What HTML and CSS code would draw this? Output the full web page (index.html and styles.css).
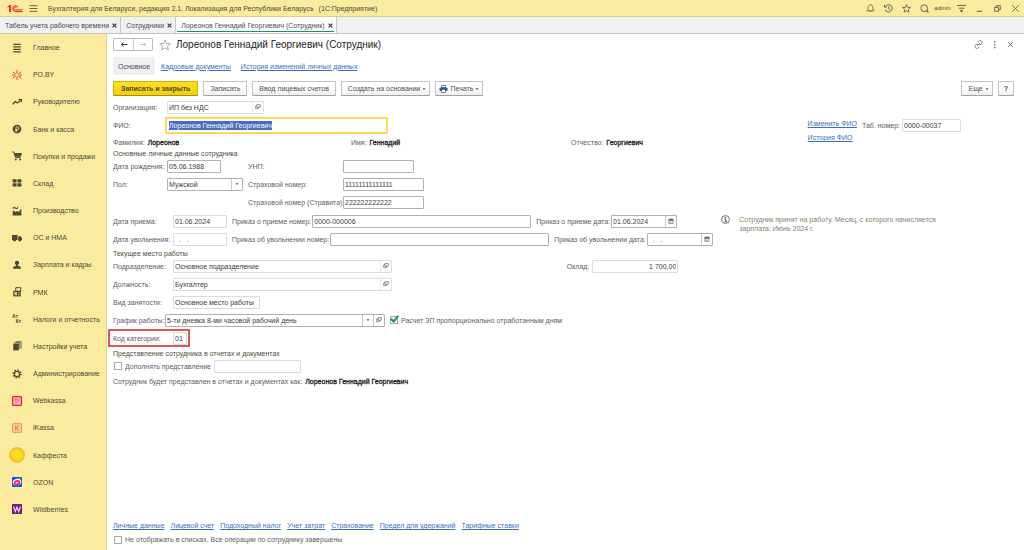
FILE: index.html
```html
<!DOCTYPE html>
<html lang="ru">
<head>
<meta charset="utf-8">
<title>Лореонов Геннадий Георгиевич (Сотрудник)</title>
<link rel="stylesheet" href="styles.css">
</head>
<body>
<svg class="sprite" aria-hidden="true">
  <symbol id="open" viewBox="0 0 14 14"><path d="M4.5 1.5h8v6h-8zM4.500 4.500h-3v6.500h6.500v-3.500" fill="none" stroke="currentColor" stroke-width="1.500"/></symbol>
  <symbol id="cal" viewBox="0 0 14 14"><path d="M2 3h10v9.500H2z" fill="none" stroke="currentColor" stroke-width="1.500"/><path d="M2 3h10v3.500H2zM4 1h1.500v2H4zM8.500 1H10v2H8.500z" fill="currentColor"/><path d="M4 8.500h6M4 10.500h6" stroke="currentColor" stroke-dasharray="1 1"/></symbol>
  <symbol id="caret" viewBox="0 0 8 8"><path d="M1 2.500h6L4 6z" fill="currentColor"/></symbol>
  <symbol id="star" viewBox="0 0 16 16"><path d="M8 1.200l2 4.700 5 .4-3.800 3.300 1.200 5L8 12l-4.400 2.600 1.200-5L1 6.300l5-.4z" fill="none" stroke="currentColor" stroke-width="1.300"/></symbol>
</svg>

<header class="titlebar">
  <svg class="logo" viewBox="0 0 32 18" aria-label="1С"><g fill="none" stroke="#e0262b" stroke-width="2"><path d="M1 6.500l4-3.500v13M4 3h3.500v13"/><path d="M22 6a5.800 5.800 0 1 0-5.500 9H31"/><path d="M19 7.500a2.800 2.800 0 1 0-2.500 4.200H31"/></g></svg>
  <button class="tool" aria-label="Меню"><svg viewBox="0 0 16 16"><path d="M1 3h14M1 8h14M1 13h14" stroke="currentColor" stroke-width="1.500"/></svg></button>
  <div class="app-name">Бухгалтерия для Беларуси, редакция 2.1. Локализация для Республики Беларусь <span>(1С:Предприятие)</span></div>
  <div class="window-tools">
    <button class="tool" aria-label="Уведомления"><svg viewBox="0 0 16 16"><path d="M8 1.500c3 0 4 2.500 4 5 0 3 1 4 2.500 5.500h-13C3 10.500 4 9.500 4 6.500c0-2.500 1-5 4-5zM6.500 12.500q1.500 3 3 0" fill="none" stroke="currentColor" stroke-width="1.300"/></svg></button>
    <button class="tool" aria-label="История"><svg viewBox="0 0 16 16"><path d="M2.500 4.500A6.500 6.500 0 1 1 2 10M1 1.500v4h4M8.500 4v4.500l3 2" fill="none" stroke="currentColor" stroke-width="1.400"/></svg></button>
    <button class="tool" aria-label="Избранное"><svg><use href="#star"/></svg></button>
    <button class="tool" aria-label="Поиск"><svg viewBox="0 0 16 16"><circle cx="7.500" cy="7.500" r="6" fill="none" stroke="currentColor" stroke-width="1.400"/><path d="M11.500 11.500l3.500 3.500" stroke="currentColor" stroke-width="2"/></svg></button>
    <button class="user">admin</button>
    <button class="tool" aria-label="Настройки"><svg viewBox="0 0 16 16"><path d="M0 2.500h16M3 7.500h10" stroke="currentColor" stroke-width="1.500"/><path d="M5 11h6l-3 4z" fill="currentColor"/></svg></button>
    <button class="tool" aria-label="Свернуть"><svg viewBox="0 0 16 16"><path d="M3 13h10" stroke="currentColor" stroke-width="1.500"/></svg></button>
    <button class="tool" aria-label="Окно"><svg viewBox="0 0 16 16"><path d="M3 6h7v7H3zM6 6V3h7v7h-3" fill="none" stroke="currentColor" stroke-width="1.400"/></svg></button>
    <button class="tool" aria-label="Закрыть"><svg viewBox="0 0 16 16"><path d="M2 2l12 12M14 2L2 14" stroke="currentColor" stroke-width="1.300"/></svg></button>
  </div>
</header>

<nav class="tabs" aria-label="Окна">
  <div class="tab"><a href="#">Табель учета рабочего времени</a><button aria-label="Закрыть"><svg viewBox="0 0 8 8"><path d="M1 1l6 6M7 1L1 7" stroke="currentColor" stroke-width="1.800"/></svg></button></div>
  <div class="tab"><a href="#">Сотрудники</a><button aria-label="Закрыть"><svg viewBox="0 0 8 8"><path d="M1 1l6 6M7 1L1 7" stroke="currentColor" stroke-width="1.800"/></svg></button></div>
  <div class="tab active"><a href="#">Лореонов Геннадий Георгиевич (Сотрудник)</a><button aria-label="Закрыть"><svg viewBox="0 0 8 8"><path d="M1 1l6 6M7 1L1 7" stroke="currentColor" stroke-width="1.800"/></svg></button></div>
</nav>

<div class="workspace">
  <nav class="sections" aria-label="Разделы">
    <a href="#"><svg viewBox="0 0 16 16"><path d="M2 2h12M2 6h12M2 10h12M2 14h12" stroke="currentColor" stroke-width="2"/></svg>Главное</a>
    <a href="#"><svg viewBox="0 0 16 16"><path d="M8 0v6M8 10v6M1 3l5 3.500M15 3l-5 3.500M1 13l5-3.500M15 13l-5-3.500M0 8h5M11 8h5" stroke="#e8453c" stroke-width="1.600"/></svg>РО.BY</a>
    <a href="#"><svg viewBox="0 0 16 16"><path d="M1 12l4-5 4 2.500L14 5" fill="none" stroke="currentColor" stroke-width="2"/><path d="M10 3h6v6z" fill="currentColor"/></svg>Руководителю</a>
    <a href="#"><svg viewBox="0 0 16 16"><circle cx="8" cy="8" r="7" fill="currentColor"/><path d="M6.500 13V4.500H9a2.200 2.200 0 0 1 0 4.500H5M5 11h4" fill="none" stroke="#fbeb9e" stroke-width="1.300"/></svg>Банк и касса</a>
    <a href="#"><svg viewBox="0 0 16 16"><path d="M0 1.500h3L5.500 10.500H14" fill="none" stroke="currentColor" stroke-width="1.500"/><path d="M3.500 3H16l-2 6H5z" fill="currentColor"/><circle cx="6" cy="13.500" r="1.700" fill="currentColor"/><circle cx="13" cy="13.500" r="1.700" fill="currentColor"/></svg>Покупки и продажи</a>
    <a href="#"><svg viewBox="0 0 16 16"><path d="M1 2h6.300v5H1zM8.700 2H15v5H8.700zM1 8.500h6.300v5H1zM8.700 8.500H15v5H8.700z" fill="currentColor"/></svg>Склад</a>
    <a href="#"><svg viewBox="0 0 16 16"><path d="M1 15V9l3-2 1 3 4-3v3l4-3V5h2v10z" fill="currentColor"/><path d="M2 5V2h3v2h4V1" fill="none" stroke="currentColor" stroke-width="1.500"/></svg>Производство</a>
    <a href="#"><svg viewBox="0 0 16 16"><path d="M0 3h9v8H0zM10 5h3.500L16 8v3h-6z" fill="currentColor"/><circle cx="4" cy="11.500" r="2" fill="currentColor"/><circle cx="12.500" cy="11.500" r="2" fill="currentColor"/></svg>ОС и НМА</a>
    <a href="#"><svg viewBox="0 0 16 16"><circle cx="8" cy="4.500" r="3.500" fill="currentColor"/><path d="M6.500 7h3v2.500q5 .5 5 4.500h-13q0-4 5-4.500z" fill="currentColor"/></svg>Зарплата и кадры</a>
    <a href="#"><svg viewBox="0 0 16 16"><path d="M2 6h12v9H2z" fill="currentColor"/><path d="M6 1h8v6H6z" fill="none" stroke="currentColor" stroke-width="1.500"/><path d="M4 8h4v5H4zM10 8h2v2h-2zM10 11h2v2h-2z" fill="#d9cc8b"/></svg>РМК</a>
    <a href="#"><svg class="letters" viewBox="0 0 16 16"><text x="0" y="7">Ат</text><text x="6" y="15">Кт</text></svg>Налоги и отчетность</a>
    <a href="#"><svg viewBox="0 0 16 16"><path d="M2 4h9v11H2z" fill="currentColor"/><path d="M4 2.500h8.500V13M6 1h8.500v11" fill="none" stroke="currentColor" stroke-width="1.200"/></svg>Настройки учета</a>
    <a href="#"><svg viewBox="0 0 16 16"><circle cx="8" cy="8" r="4.200" fill="none" stroke="currentColor" stroke-width="2"/><circle cx="8" cy="8" r="6.300" fill="none" stroke="currentColor" stroke-width="2.400" stroke-dasharray="2.200 2.748"/></svg>Администрирование</a>
    <a href="#"><svg viewBox="0 0 16 16"><rect x="1" y="1" width="14" height="14" rx="1" fill="#fbc0c4" stroke="#ee1c3c" stroke-width="2"/><path d="M4 5h8M4 8h3M9 8h3M4 11h5M6 4v3M10 6v3" stroke="#ee3c58"/></svg>Webkassa</a>
    <a href="#"><svg viewBox="0 0 16 16"><rect x="1" y="1" width="14" height="14" rx="1" fill="#fad08c" stroke="#ee8a5c" stroke-width="1.500"/><path d="M6 4v8M11 4L6.500 8l4.500 4" fill="none" stroke="#e5694a" stroke-width="1.500"/></svg>iKassa</a>
    <a href="#"><svg class="coin" viewBox="0 0 16 16"><circle cx="8" cy="8" r="7.300" fill="#fcd51e" stroke="#e2ab1d"/><circle cx="8" cy="8" r="5" fill="#ffdc25" stroke="#f0bf18" stroke-width=".6"/></svg>Каффеста</a>
    <a href="#"><svg viewBox="0 0 16 16"><rect width="16" height="16" rx="2" fill="#1457dc"/><ellipse cx="8" cy="8" rx="7" ry="5" fill="#fff" transform="rotate(-18 8 8)"/><ellipse cx="8" cy="9" rx="4.300" ry="2.500" fill="#fff" stroke="#f01c50" stroke-width="2.600" transform="rotate(-18 8 9)"/></svg>OZON</a>
    <a href="#"><svg viewBox="0 0 16 16"><rect width="16" height="16" rx="1" fill="#6e1f86"/><path d="M2.500 4l2.800 8L8 5l2.700 7 2.800-8" fill="none" stroke="#f3dcf5" stroke-width="1.800"/></svg>Wildberries</a>
  </nav>

  <main class="card">
    <div class="heading">
      <div class="history"><button aria-label="Назад"><svg viewBox="0 0 16 10"><path d="M15 5H3M7 1L2.500 5 7 9" fill="none" stroke="#333" stroke-width="2"/></svg></button><button aria-label="Вперед"><svg viewBox="0 0 16 10"><path d="M1 5h12M9 1l4.500 4L9 9" fill="none" stroke="#aaa" stroke-width="1.500"/></svg></button></div>
      <button class="fav" aria-label="В избранное"><svg><use href="#star"/></svg></button>
      <h1>Лореонов Геннадий Георгиевич (Сотрудник)</h1>
      <div class="card-tools">
        <button class="tool" aria-label="Ссылка"><svg viewBox="0 0 16 16"><path d="M7 4l1-1.500C10-.5 14.500 1 14.500 4.500 14 7.500 11 9 9 8M9 12l-1 1.500C6 16 1.500 15 1.500 11.500 2 8.500 5 7 7 8M5.500 10.500l5-5" fill="none" stroke="currentColor" stroke-width="1.300"/></svg></button>
        <button class="tool" aria-label="Действия"><svg viewBox="0 0 16 16"><path d="M7 2h2.500v2.500H7zM7 7h2.500v2.500H7zM7 12h2.500v2.500H7z" fill="currentColor"/></svg></button>
        <button class="tool" aria-label="Закрыть"><svg viewBox="0 0 16 16"><path d="M4 4l8 8M12 4l-8 8" stroke="currentColor" stroke-width="1.500"/></svg></button>
      </div>
    </div>

    <nav class="subnav"><span class="current">Основное</span><a href="#">Кадровые документы</a><a href="#">История изменений личных данных</a></nav>

    <div class="toolbar">
      <button class="btn primary">Записать и закрыть</button>
      <button class="btn">Записать</button>
      <button class="btn">Ввод лицевых счетов</button>
      <button class="btn menu">Создать на основании<svg class="caret"><use href="#caret"/></svg></button>
      <button class="btn menu print"><svg class="printer" viewBox="0 0 16 16"><path d="M4 1h8v4H4z" fill="#fff" stroke="#34578c" stroke-width="1.500"/><rect y="5" width="16" height="7" rx="1.500" fill="#34578c"/><path d="M4 9h8v6H4z" fill="#fff" stroke="#34578c" stroke-width="1.500"/></svg>Печать<svg class="caret"><use href="#caret"/></svg></button>
      <span class="grow"></span>
      <button class="btn menu">Еще<svg class="caret"><use href="#caret"/></svg></button>
      <button class="btn help">?</button>
    </div>

    <form class="form">
      <section class="personal">
        <div class="row"><label class="key" for="org">Организация:</label><div class="field quiet w-l"><input id="org" value="ИП без НДС"><button type="button" aria-label="Открыть"><svg><use href="#open"/></svg></button></div></div>
        <div class="row"><label class="key" for="fio">ФИО:</label><div class="field focused"><span class="selected" id="fio" role="textbox" contenteditable="true">Лореонов Геннадий Георгиевич</span></div></div>
        <div class="names"><span>Фамилия: <b>Лореонов</b></span><span>Имя: <b>Геннадий</b></span><span>Отчество: <b>Георгиевич</b></span></div>
        <h2>Основные личные данные сотрудника</h2>
        <div class="row"><label class="key" for="born">Дата рождения:</label><div class="col"><div class="field w-s"><input id="born" value="05.06.1988"></div></div><label class="key2" for="unp">УНП:</label><div class="field w-m"><input id="unp"></div></div>
        <div class="row"><label class="key" for="sex">Пол:</label><div class="col"><div class="field w-sex"><select id="sex"><option>Мужской</option></select><span class="drop"><svg><use href="#caret"/></svg></span></div></div><label class="key2" for="ins">Страховой номер:</label><div class="field w-n"><input id="ins" value="11111111111111"></div></div>
        <div class="row"><span class="key"></span><span class="col"></span><label class="key2" for="ins2">Страховой номер (Стравита):</label><div class="field w-n"><input id="ins2" value="222222222222"></div></div>
      </section>

      <aside class="side">
        <div class="side-links"><a href="#">Изменить ФИО</a><a href="#">История ФИО</a></div>
        <div class="row"><label for="tab">Таб. номер:</label><div class="field quiet w-tab"><input id="tab" value="0000-00037"></div></div>
      </aside>

      <section class="dates">
        <div class="row"><label class="key wide" for="d1">Дата приема:</label><div class="field quiet w-s"><input id="d1" value="01.06.2024"></div><label class="next" for="o1">Приказ о приеме номер:</label><div class="field w-order"><input id="o1" value="0000-000006"></div><label class="next" for="p1">Приказ о приеме дата:</label><div class="field w-date"><input id="p1" value="01.06.2024"><button type="button" aria-label="Календарь"><svg><use href="#cal"/></svg></button></div></div>
        <div class="row"><label class="key wide" for="d2">Дата увольнения:</label><div class="field quiet w-s"><input id="d2" value="  .   ."></div><label class="next" for="o2">Приказ об увольнении номер:</label><div class="field w-order"><input id="o2"></div><label class="next" for="p2">Приказ об увольнении дата:</label><div class="field w-date"><input id="p2" value="  .   ."><button type="button" aria-label="Календарь"><svg><use href="#cal"/></svg></button></div></div>
      </section>

      <aside class="note"><svg viewBox="0 0 16 16"><circle cx="8" cy="8" r="7" fill="none" stroke="#444" stroke-width="1.300"/><path d="M6 7h2.500v5M6 12h5" fill="none" stroke="#444" stroke-width="1.500"/><circle cx="8" cy="4.200" r="1.200" fill="#444"/></svg><p>Сотрудник принят на работу. Месяц, с которого начисляется зарплата: Июнь 2024 г.</p></aside>

      <section class="job">
        <h2>Текущее место работы</h2>
        <div class="row"><label class="key wide" for="dep">Подразделение:</label><div class="field quiet w-xl"><input id="dep" value="Основное подразделение"><button type="button" aria-label="Открыть"><svg><use href="#open"/></svg></button></div><span class="grow"></span><label for="pay">Оклад:</label><div class="field quiet w-pay"><input id="pay" value="1 700,00"></div></div>
        <div class="row"><label class="key wide" for="post">Должность:</label><div class="field quiet w-xl"><input id="post" value="Бухгалтер"><button type="button" aria-label="Открыть"><svg><use href="#open"/></svg></button></div></div>
        <div class="row"><label class="key wide" for="kind">Вид занятости:</label><div class="field quiet w-m2"><input id="kind" value="Основное место работы"></div></div>
        <div class="row"><label class="key tight" for="plan">График работы:</label><div class="field w-plan"><select id="plan"><option>5-ти дневка 8-ми часовой рабочий день</option></select><span class="drop"><svg><use href="#caret"/></svg></span><button type="button" aria-label="Открыть"><svg><use href="#open"/></svg></button></div><label class="check shifted"><input type="checkbox" checked>Расчет ЗП пропорционально отработанным дням</label></div>
        <div class="row marked"><label class="key wide" for="code">Код категории:</label><div class="field quiet w-code"><input id="code" value="01"></div></div>
        <h2 class="spaced">Представление сотрудника в отчетах и документах</h2>
        <div class="row"><label class="check extend"><input type="checkbox">Дополнять представление</label><div class="field quiet w-m2"><input aria-label="Дополнение"></div></div>
        <p class="summary">Сотрудник будет представлен в отчетах и документах как: <b>Лореонов Геннадий Георгиевич</b></p>
      </section>
    </form>

    <footer>
      <nav class="links"><a href="#">Личные данные</a><a href="#">Лицевой счет</a><a href="#">Подоходный налог</a><a href="#">Учет затрат</a><a href="#">Страхование</a><a href="#">Предел для удержаний</a><a href="#">Тарифные ставки</a></nav>
      <label class="check"><input type="checkbox">Не отображать в списках. Все операции по сотруднику завершены</label>
    </footer>
  </main>
</div>
</body>
</html>
```
FILE: styles.css
```css
* { box-sizing: border-box; }
body {
  margin: 0;
  min-height: 100vh;
  display: flex;
  flex-direction: column;
  font: 7px/9px "Liberation Sans", Arial, sans-serif;
  color: #5c5c5c;
  background: #fff;
}
button, input, select {
  font: inherit;
  color: inherit;
  border: 0;
  padding: 0;
  margin: 0;
  background: none;
}
a { color: #3a6fc0; text-underline-offset: 1px; }
h1, h2, p { margin: 0; font-weight: normal; }
svg { display: block; flex: none; }
.sprite { position: absolute; width: 0; height: 0; }
.grow { flex: 1; }

.titlebar {
  height: 17px;
  display: flex;
  align-items: center;
  padding: 0 0 0 7px;
  background: #fbeb9e;
  border-bottom: 1px solid #d9cd97;
  color: #4c4838;
}
.logo { width: 16px; height: 9px; margin-right: 6px; }
.tool { width: 18px; height: 14px; display: grid; place-items: center; }
.tool svg { width: 9px; height: 9px; }
.titlebar > .tool { width: 9px; }
.app-name { flex: 1; margin-left: 10px; }
.app-name span { margin-left: 3px; }
.window-tools { display: flex; align-items: center; }
.user { width: 19px; font-size: 6px; }

.tabs {
  height: 17px;
  display: flex;
  background: #f0f0f0;
  border-bottom: 1px solid #c4c4c4;
}
.tab {
  display: flex;
  align-items: center;
  gap: 3px;
  padding: 0 3px 0 5px;
  border-right: 1px solid #c8c8c8;
}
.tab a { color: #4c4c4c; text-decoration: none; }
.tab svg { width: 5px; height: 5px; color: #333; }
.tab.active { background: linear-gradient(#0f9a52, #0f9a52) center 14px / calc(100% - 3px) 1px no-repeat #fff; }

.workspace { flex: 1; display: flex; }
.sections {
  flex: none;
  width: 107px;
  display: grid;
  grid-auto-rows: minmax(20px, 1fr);
  padding-bottom: 27px;
  background: #fbeb9e;
  border-right: 1px solid #e4d68f;
}
.sections a {
  display: grid;
  grid-template-columns: 33px 1fr;
  align-items: center;
  color: #4c4838;
  text-decoration: none;
  white-space: nowrap;
}
.sections svg { width: 10px; height: 10px; justify-self: center; }
.sections .coin { width: 16px; height: 16px; }
.letters { font-size: 8px; font-weight: bold; fill: currentColor; }

.card {
  flex: 1;
  min-width: 0;
  display: flex;
  flex-direction: column;
  padding: 4px 10px 6px 6px;
}
.heading { display: flex; align-items: center; height: 13px; margin-bottom: 6px; }
.history {
  display: flex;
  height: 13px;
  border: 1px solid #bbb;
  border-radius: 1px;
}
.history button { width: 19px; display: grid; place-items: center; }
.history button + button { border-left: 1px solid #ccc; }
.history svg { width: 8px; height: 5px; }
.fav { margin: 0 5px 0 6px; color: #aaa; }
.fav svg { width: 12px; height: 12px; }
h1 { flex: 1; font-size: 10px; line-height: 13px; color: #222; }
.card-tools { display: flex; margin-right: -4px; }
.card-tools .tool { width: 16px; }

.subnav { display: flex; align-items: center; gap: 10px; height: 18px; margin-bottom: 6px; }
.subnav a { text-decoration-thickness: 1px; }
.subnav .current {
  padding: 5px 5px 4px;
  margin-right: -4px;
  background: #f0f0f0;
  color: #4c4c4c;
}

.toolbar { display: flex; gap: 5px; height: 15px; margin-bottom: 2px; }
.btn {
  display: flex;
  align-items: center;
  gap: 3px;
  padding: 0 6px;
  border: 1px solid #c4c4c4;
  border-bottom-color: #a0a0a0;
  border-radius: 1px;
  background: linear-gradient(#fff 50%, #eee);
  color: #4c4c4c;
}
.btn.primary {
  padding: 0 7px;
  background: linear-gradient(#ffe01c, #f7cf00);
  border-color: #d1b010;
  border-bottom-color: #a38a1c;
  font-weight: bold;
}
.btn.menu { gap: 2px; padding-right: 3px; }
.btn.print { padding-left: 3px; }
.btn.help { font-weight: bold; padding: 0 5px; }
.caret { width: 4px; height: 4px; }
.printer { width: 9px; height: 8px; }

.form {
  display: grid;
  grid-template-columns: 608fr 297fr;
}
.form > * { min-width: 0; }
.row { display: flex; align-items: center; height: 18px; white-space: nowrap; }
.key { flex: none; width: 54px; }
.key.wide { width: 60px; }
.key.tight { width: 52px; }
.key2 { width: 95px; }
.col { width: 81px; }
.next { margin: 0 1px 0 5px; }

.field {
  display: flex;
  flex: none;
  height: 13px;
  border: 1px solid #b0b0b0;
  border-radius: 1px;
  color: #3c3c3c;
}
.field.quiet { border-color: #dcdcdc; }
.field input, .field select {
  flex: 1;
  width: 0;
  min-width: 0;
  padding: 0 1px;
  appearance: none;
  outline: 0;
}
.field button, .drop {
  width: 11px;
  display: grid;
  place-items: center;
  border-left: 1px solid #c8c8c8;
  color: #555;
}
.quiet button { border-left-color: #e4e4e4; }
.field svg { width: 6px; height: 6px; }
.drop svg { width: 4px; height: 4px; }
.focused {
  width: 223px;
  height: 17px;
  margin-left: -2px;
  padding: 0 2px;
  align-items: center;
  border: 2px solid #fbd956;
}
.selected { background: #4a6cc4; color: #fff; outline: 0; }
.w-s { width: 54px; }
.w-sex { width: 76px; }
.w-l { width: 97px; }
.w-m { width: 71px; }
.w-n { width: 81px; }
.w-m2 { width: 87px; }
.w-tab { width: 59px; }
.w-order { width: 219px; }
.w-date { width: 66px; }
.w-xl { width: 219px; }
.w-plan { width: 220px; }
.w-code { width: 14px; }
.w-pay { width: 86px; margin: 0 40px 0 3px; }
.w-pay input { text-align: right; }

.names { display: grid; grid-template-columns: 238px 220px 1fr; padding: 4px 0; }
b {
  margin-left: 1px;
  font-weight: normal;
  color: #222;
  -webkit-text-stroke: 0.3px #222;
}
h2 { font-size: 7px; line-height: 6px; color: #504a34; }
.spaced { margin-top: 4px; }

.side { display: flex; justify-content: flex-end; align-items: flex-start; gap: 5px; padding: 18px 53px 0 0; }
.side-links { display: flex; flex-direction: column; gap: 5px; padding-top: 3px; }
.side .row { gap: 2px; }
.dates { margin-top: 1px; }
.note { display: flex; gap: 9px; padding: 4px 60px 0 3px; color: #85806c; }
.note svg { width: 9px; height: 9px; }
.job { padding-top: 3px; }

.check { display: flex; align-items: center; gap: 3px; }
.check input {
  appearance: none;
  width: 8px;
  height: 8px;
  margin-left: 1px;
  border: 1px solid #aaa;
}
.check input:checked {
  display: grid;
  place-items: center;
}
.check input:checked::before {
  content: "";
  box-sizing: border-box;
  width: 5px;
  height: 8px;
  margin-top: -4px;
  border: solid #14944e;
  border-width: 0 2px 2px 0;
  transform: rotate(40deg);
}
.check.shifted { margin-left: 4px; }
.check.extend { margin-right: 3px; }
.marked {
  width: 82px;
  margin-left: -5px;
  padding-left: 3px;
  border: 2px solid #e05555;
}
.summary { padding-top: 2px; }

footer { margin-top: auto; }
.links { display: flex; gap: 6px; margin-bottom: 5px; }
```
